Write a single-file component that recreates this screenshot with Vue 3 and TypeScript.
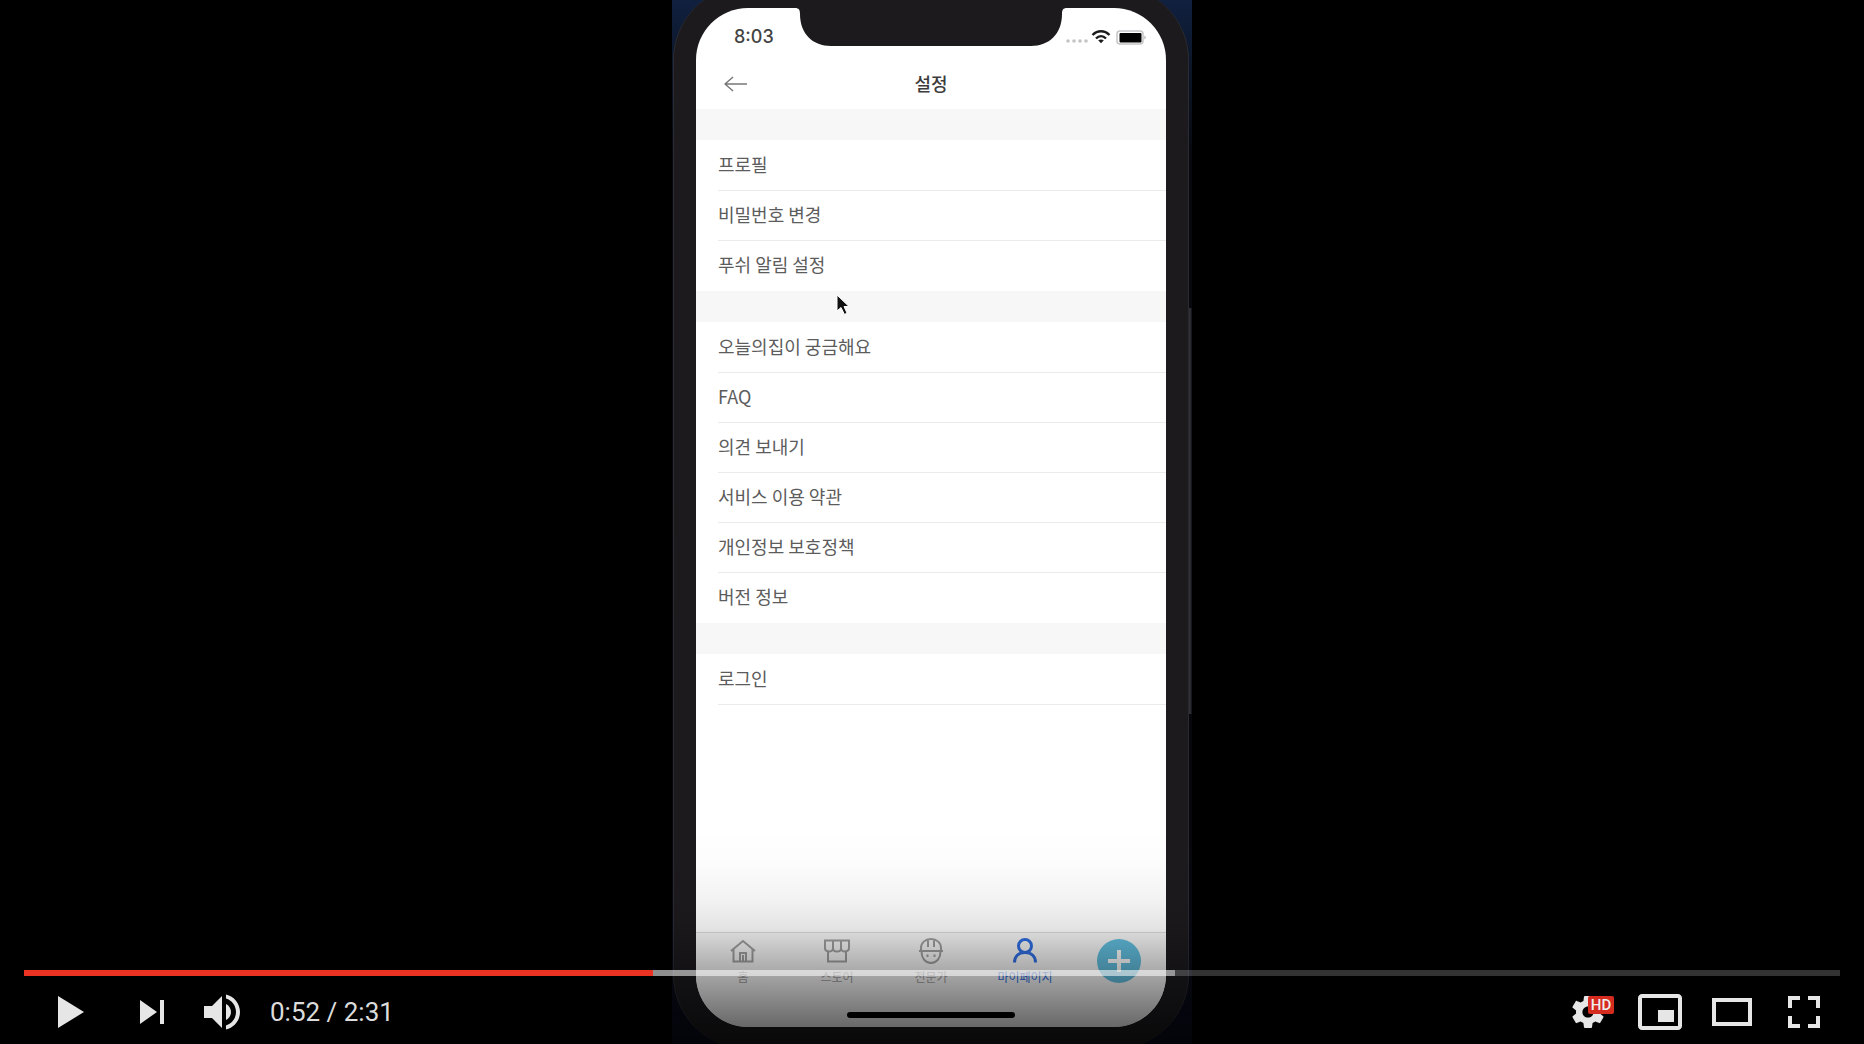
<script setup lang="ts">
import { computed, ref } from 'vue'

interface Tab {
  label: string
  icon: 'home' | 'store' | 'expert' | 'person'
  active?: boolean
}

const groups: string[][] = [
  ['프로필', '비밀번호 변경', '푸쉬 알림 설정'],
  ['오늘의집이 궁금해요', 'FAQ', '의견 보내기', '서비스 이용 약관', '개인정보 보호정책', '버전 정보'],
  ['로그인'],
]

const tabs: Tab[] = [
  { label: '홈', icon: 'home' },
  { label: '스토어', icon: 'store' },
  { label: '전문가', icon: 'expert' },
  { label: '마이페이지', icon: 'person', active: true },
]

const duration = 151
const loaded = 95.7
const position = ref(52.3)

const format = (seconds: number): string => {
  const whole = Math.floor(seconds)
  return `${Math.floor(whole / 60)}:${String(whole % 60).padStart(2, '0')}`
}

const clock = computed(() => `${format(position.value)} / ${format(duration)}`)
const seekStyle = computed(() => ({
  '--played': `${(position.value / duration) * 100}%`,
  '--loaded': `${(loaded / duration) * 100}%`,
}))
</script>

<template>
  <main class="player">
    <section class="frame">
      <div class="phone">
        <div class="screen">
          <svg class="notch" viewBox="0 0 272 38" aria-hidden="true">
            <path d="M0 0C4 0 5 2 5 6C5 26 18 38 36 38H236C254 38 267 26 267 6C267 2 268 0 272 0Z" />
          </svg>

          <div class="status">
            <span class="status-time">8:03</span>
            <svg class="status-icons" viewBox="0 0 82 18" aria-hidden="true">
              <g fill="#c4c4c6">
                <circle cx="4" cy="13" r="1.8" /><circle cx="10" cy="13" r="1.8" />
                <circle cx="16" cy="13" r="1.8" /><circle cx="22" cy="13" r="1.8" />
              </g>
              <g fill="none" stroke="#1c1c1e" stroke-width="2.4">
                <path d="M28.500 7C33.500 2 40.500 2 45.500 7" />
                <path d="M32 10.500C35 7.500 39 7.500 42 10.500" />
              </g>
              <path d="M34.200 12.300C36 11.100 38 11.100 39.800 12.300L37 15.300Z" fill="#1c1c1e" />
              <rect x="53" y="3" width="26" height="13" rx="3" fill="#fff" stroke="#c4c4c6" stroke-width="1.500" />
              <rect x="55.500" y="5" width="22" height="9.500" rx="1" fill="#000" />
              <path d="M80.500 7.500C82 8 82 11 80.500 11.500Z" fill="#a5a5a7" />
            </svg>
          </div>

          <header class="nav">
            <button class="back" type="button" aria-label="뒤로">
              <svg viewBox="0 0 24 16" aria-hidden="true"><path d="M9 1L1 8L9 15M1 8H23" /></svg>
            </button>
            <h1>설정</h1>
          </header>

          <div class="settings">
            <ul v-for="(group, g) in groups" :key="g" class="group">
              <li v-for="item in group" :key="item"><a href="#">{{ item }}</a></li>
            </ul>
          </div>

          <footer class="dock">
            <nav class="tabs">
              <a v-for="tab in tabs" :key="tab.label" href="#" class="tab" :class="{ active: tab.active }">
                <svg viewBox="0 0 28 28" aria-hidden="true">
                  <path v-if="tab.icon === 'home'" d="M2 14L14 4L26 14M4.500 12.500V24.500H23.500V12.500M11 24V16H17V24M14 18V24" />
                  <g v-else-if="tab.icon === 'store'">
                    <path d="M2 3.500H26V11C26 15.500 18 15.500 18 11.500C18 15.500 10 15.500 10 11.500C10 15.500 2 15.500 2 11ZM10 3.500V11.500M18 3.500V11.500" />
                    <path d="M5 15V24.500H23V15" />
                  </g>
                  <g v-else-if="tab.icon === 'expert'">
                    <path d="M2 14H26M4 13V11C4 6 8 2 14 2S24 6 24 11V13M11 3V10M17 3V10M4.500 14.500C4.500 21 8 26 14 26S23.500 21 23.500 14.500" />
                    <path d="M10.500 17.500V20M17.500 17.500V20" />
                  </g>
                  <g v-else class="person">
                    <circle cx="14" cy="9" r="6.500" />
                    <path d="M3.500 25.500C3.500 19 8 15.500 14 15.500S24.500 19 24.500 25.500" />
                  </g>
                </svg>
                <span>{{ tab.label }}</span>
              </a>
              <div class="tab">
                <button class="add" type="button" aria-label="추가">
                  <svg viewBox="0 0 44 44" aria-hidden="true"><path d="M22 11V33M11 22H33" /></svg>
                </button>
              </div>
            </nav>
            <div class="home-indicator"></div>
          </footer>

          <svg class="cursor" viewBox="0 0 14 22" aria-hidden="true">
            <path d="M1 1V17L5 13.500L8.500 20.500L11 19L8 12.500H13Z" />
          </svg>
        </div>
      </div>
      <span class="side-button"></span>
    </section>

    <section class="overlay">
      <input
        v-model.number="position"
        class="seek"
        type="range"
        min="0"
        :max="duration"
        step="0.1"
        aria-label="Seek"
        :style="seekStyle"
      />
      <div class="controls">
        <button class="control play" type="button" aria-label="Play">
          <svg viewBox="0 0 36 34"><path d="M12 10L25 18L12 26Z" /></svg>
        </button>
        <button class="control" type="button" aria-label="Next">
          <svg viewBox="0 0 36 34"><path d="M12 24L20.500 18L12 12ZM22 12V24H24V12Z" /></svg>
        </button>
        <button class="control" type="button" aria-label="Mute">
          <svg viewBox="0 0 36 34">
            <path d="M8 21H12L17 26V10L12 15H8ZM19 14V22C20.480 21.320 21.500 19.770 21.500 18S20.480 14.740 19 14ZM19 11.290C21.890 12.150 24 14.830 24 18S21.890 23.850 19 24.710V26.770C23.010 25.860 26 22.280 26 18S23.010 10.140 19 9.230Z" />
          </svg>
        </button>
        <span class="clock">{{ clock }}</span>
        <span class="spacer"></span>
        <button class="control" type="button" aria-label="Settings">
          <svg viewBox="0 0 36 34">
            <path fill-rule="evenodd" d="M23.940 18.780C23.970 18.530 24 18.270 24 18S23.980 17.470 23.940 17.220L25.630 15.900C25.780 15.780 25.830 15.560 25.730 15.380L24.130 12.610C24.030 12.440 23.820 12.370 23.640 12.440L21.650 13.240C21.230 12.920 20.780 12.660 20.300 12.460L20 10.340C19.970 10.150 19.800 10 19.600 10H16.400C16.200 10 16.030 10.150 16 10.340L15.700 12.460C15.210 12.660 14.760 12.930 14.350 13.240L12.360 12.440C12.180 12.370 11.970 12.440 11.870 12.610L10.270 15.380C10.170 15.550 10.210 15.770 10.370 15.900L12.060 17.220C12.030 17.470 12 17.730 12 18S12.020 18.530 12.060 18.780L10.370 20.100C10.220 20.220 10.170 20.440 10.270 20.620L11.870 23.390C11.970 23.560 12.180 23.630 12.360 23.560L14.350 22.760C14.770 23.080 15.220 23.340 15.700 23.540L16 25.660C16.030 25.850 16.200 26 16.400 26H19.600C19.800 26 19.970 25.850 19.990 25.660L20.290 23.540C20.780 23.340 21.230 23.070 21.640 22.760L23.630 23.560C23.810 23.630 24.020 23.560 24.120 23.390L25.720 20.620C25.820 20.450 25.770 20.230 25.620 20.100ZM18 20.800C16.450 20.800 15.200 19.550 15.200 18S16.450 15.200 18 15.200S20.800 16.450 20.800 18S19.550 20.800 18 20.800Z" />
          </svg>
          <span class="badge">HD</span>
        </button>
        <button class="control" type="button" aria-label="Miniplayer">
          <svg viewBox="0 0 36 34">
            <path fill-rule="evenodd" d="M25 17H17V23H25ZM29 25V10.980C29 9.880 28.100 9 27 9H9C7.900 9 7 9.880 7 10.980V25C7 26.100 7.900 27 9 27H27C28.100 27 29 26.100 29 25ZM27 25.020H9V10.970H27Z" />
          </svg>
        </button>
        <button class="control" type="button" aria-label="Theater mode">
          <svg viewBox="0 0 36 34"><path fill-rule="evenodd" d="M28 11V25H8V11ZM10 13H26V23H10Z" /></svg>
        </button>
        <button class="control" type="button" aria-label="Full screen">
          <svg viewBox="0 0 36 34">
            <path d="M10 16H12V12H16V10H10ZM20 10V12H24V16H26V10ZM24 24H20V26H26V20H24ZM12 20H10V26H16V24H12Z" />
          </svg>
        </button>
      </div>
    </section>
  </main>
</template>

<style>
body {
  background: #000;
}
</style>

<style scoped>
* {
  box-sizing: border-box;
}

button {
  padding: 0;
  border: 0;
  background: none;
  cursor: pointer;
}

a {
  color: inherit;
  text-decoration: none;
}

svg {
  display: block;
}

.player {
  display: grid;
  height: 100vh;
  overflow: hidden;
  background: #000;
  font-family: Roboto, "Noto Sans CJK KR", sans-serif;
}

.frame,
.overlay {
  grid-area: 1 / 1;
}

/* Video picture */
.frame {
  position: relative;
  display: flex;
  justify-self: center;
  width: 520px;
  max-width: 100%;
  height: 100vh;
  overflow: hidden;
  background: linear-gradient(#10203f, #0b1424 80px, #07080d 160px, #06060b 80%, #090c1c);
}

.phone {
  display: flex;
  flex: 1;
  margin: -14px 3px -5px 1px;
  padding: 22px;
  border: 1px solid #2b2c33;
  border-width: 0 1px;
  border-radius: 74px;
  background: #1c1a1d;
}

.side-button {
  position: absolute;
  top: 308px;
  right: 0;
  width: 4px;
  height: 406px;
  background: linear-gradient(90deg, #25252a, #33343b, #0c0e14);
}

.screen {
  position: relative;
  display: flex;
  flex: 1;
  flex-direction: column;
  min-width: 0;
  overflow: hidden;
  border-radius: 52px;
  background: #fff;
  font-family: "Noto Sans CJK KR", sans-serif;
}

.notch {
  position: absolute;
  top: 0;
  left: 50%;
  width: 272px;
  height: 38px;
  margin-left: -136px;
  fill: #1c1a1d;
}

.status {
  display: flex;
  align-items: center;
  justify-content: space-between;
  height: 51px;
  padding: 6px 20px 0 38px;
}

.status-time {
  color: #444;
  font: 500 18px/24px Inter, sans-serif;
}

.status-icons {
  width: 82px;
  height: 18px;
}

.nav {
  display: grid;
  grid-template-columns: 52px 1fr 52px;
  align-items: center;
  height: 50px;
}

.back {
  justify-self: end;
}

.back svg {
  width: 24px;
  height: 16px;
  fill: none;
  stroke: #777;
  stroke-width: 1.5;
}

h1 {
  margin: 0;
  padding-bottom: 2px;
  color: #3c3c3c;
  font-size: 18px;
  font-weight: 500;
  line-height: 24px;
  text-align: center;
}

.settings {
  flex: 1;
}

.group {
  margin: 0;
  padding: 1px 0 0 22px;
  border-top: 31px solid #f7f7f7;
  list-style: none;
}

.group a {
  display: block;
  height: 50px;
  border-bottom: 1px solid #ebebeb;
  color: #5c5c5c;
  font-size: 18px;
  line-height: 46px;
}

.group:not(:last-child) li:last-child a {
  border-bottom: 0;
}

.dock {
  display: flex;
  flex-direction: column;
  align-items: center;
  padding-bottom: 9px;
  border-top: 1px solid #dcdcdc;
  background: #f8f8f8;
}

.tabs {
  display: flex;
  align-self: stretch;
  height: 79px;
  padding-top: 4px;
}

.tab {
  display: flex;
  flex: 1;
  flex-direction: column;
  align-items: center;
  color: #a0a0a0;
  font-size: 12px;
  line-height: 16px;
}

.tab > svg {
  width: 28px;
  height: 28px;
  fill: none;
  stroke: currentColor;
  stroke-width: 2;
}

.tab > span {
  margin-top: 4px;
}

.tab.active {
  color: #2f6fe4;
}

.person {
  stroke-width: 3;
}

.add {
  width: 44px;
  height: 44px;
  margin-top: 2px;
  border-radius: 50%;
  background: #62bfe0;
}

.add svg {
  fill: none;
  stroke: #fff;
  stroke-width: 4;
}

.home-indicator {
  width: 168px;
  height: 6px;
  border-radius: 3px;
  background: #000;
}

.cursor {
  position: absolute;
  top: 286px;
  left: 140px;
  width: 14px;
  height: 22px;
  fill: #111;
  stroke: #fff;
  stroke-width: 1;
}

/* Player chrome */
.overlay {
  z-index: 1;
  align-self: end;
  display: flex;
  flex-direction: column;
  min-width: 0;
  padding: 140px 24px 0;
  background: linear-gradient(
    transparent,
    rgba(0, 0, 0, 0.01) 16%,
    rgba(0, 0, 0, 0.05) 33%,
    rgba(0, 0, 0, 0.11) 46%,
    rgba(0, 0, 0, 0.33) 67%,
    rgba(0, 0, 0, 0.45) 79%,
    rgba(0, 0, 0, 0.58) 92%,
    rgba(0, 0, 0, 0.66)
  );
}

.seek {
  display: block;
  width: 100%;
  height: 6px;
  margin: 0;
  appearance: none;
  background:
    linear-gradient(90deg, #ea3323 var(--played), transparent var(--played)),
    linear-gradient(90deg, rgba(255, 255, 255, 0.45) var(--loaded), transparent var(--loaded)),
    rgba(255, 255, 255, 0.2);
  cursor: pointer;
}

.seek::-webkit-slider-thumb {
  width: 0;
  height: 0;
  appearance: none;
}

.controls {
  display: flex;
  height: 68px;
}

.control {
  position: relative;
  width: 72px;
  height: 68px;
}

.play {
  margin: 0 10px;
}

.control svg {
  width: 72px;
  height: 68px;
  fill: #e6e6e6;
}

.clock {
  margin-left: 10px;
  color: #dcdcdc;
  font-size: 26px;
  line-height: 72px;
}

.spacer {
  flex: 1;
}

.badge {
  position: absolute;
  top: 20px;
  left: 36px;
  width: 26px;
  height: 18px;
  border-radius: 2px;
  background: #d62b1f;
  color: #eee;
  font: 500 15px/18px Roboto, sans-serif;
  text-align: center;
}
</style>
